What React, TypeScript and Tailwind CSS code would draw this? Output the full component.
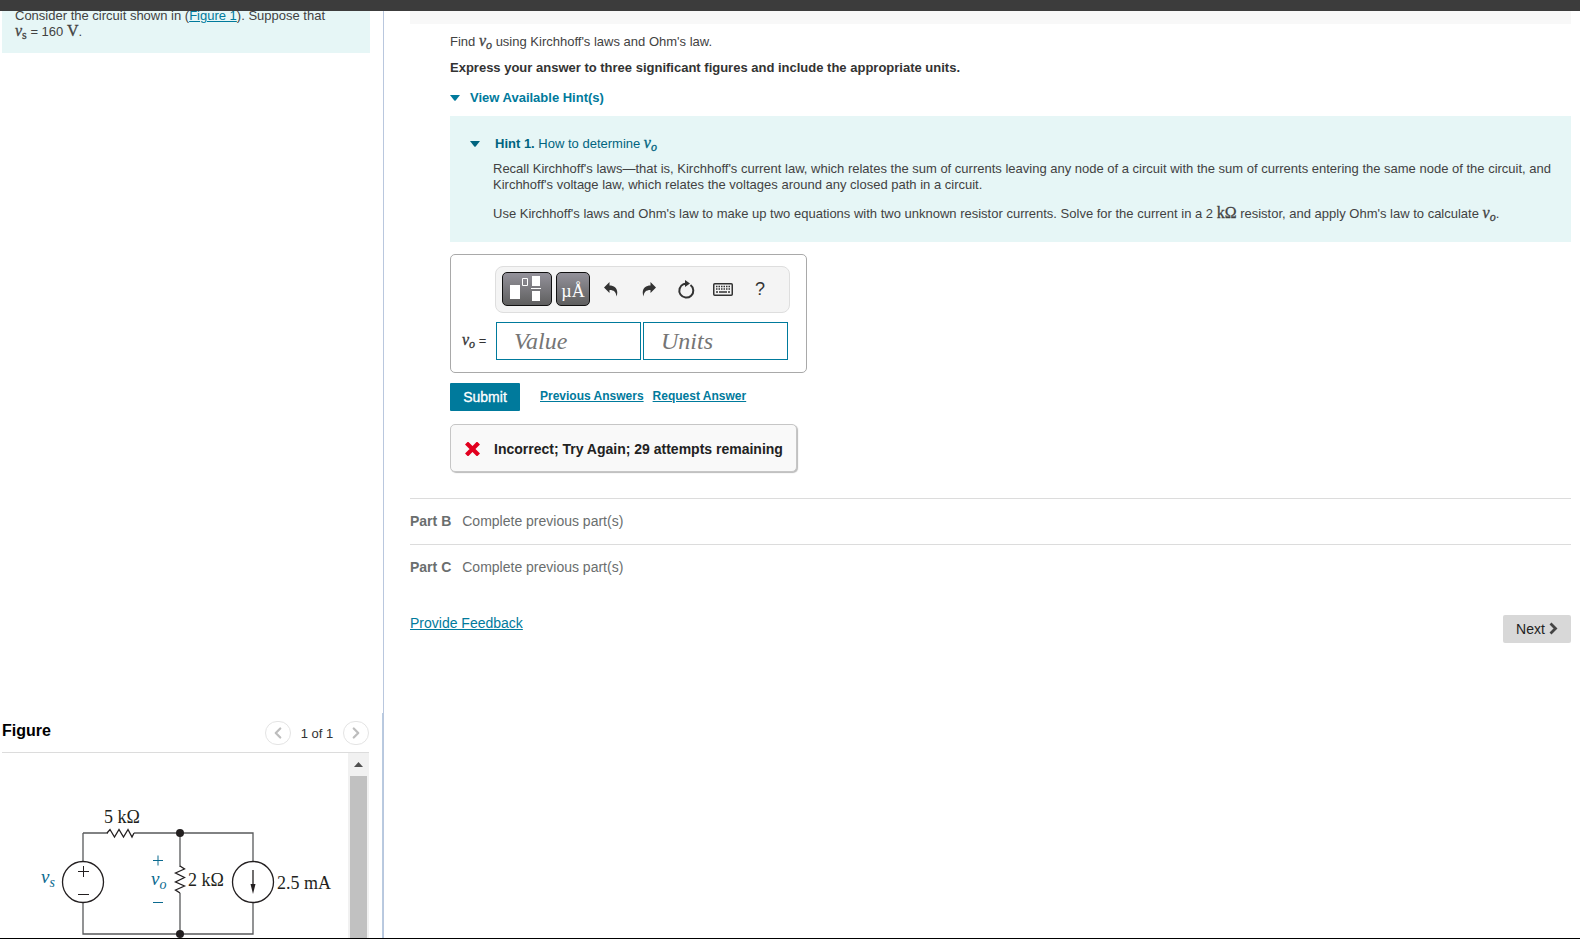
import { useState, type ReactNode } from 'react';
import { ChevronLeft, ChevronRight } from 'lucide-react';

const PARTS = [
  { id: 'B', status: 'Complete previous part(s)' },
  { id: 'C', status: 'Complete previous part(s)' },
];

function Sym({ sub, upright }: { sub: string; upright?: boolean }) {
  return (
    <span className="font-['Liberation_Serif',serif] text-base leading-0 italic [-webkit-text-stroke:0.3px]">
      v<span className={upright ? 'align-[-3px] text-xs leading-0 not-italic' : 'align-[-3px] text-xs leading-0'}>{sub}</span>
    </span>
  );
}

function Unit({ children }: { children: ReactNode }) {
  return <span className="font-['Liberation_Serif',serif] text-base leading-0 [-webkit-text-stroke:0.3px]">{children}</span>;
}

function Caret() {
  return (
    <svg width="10" height="6" viewBox="0 0 10 6" fill="currentColor" aria-hidden="true">
      <path d="M0 0h10L5.7 5.4a1 1 0 0 1-1.4 0z" />
    </svg>
  );
}

function Circuit() {
  return (
    <svg width="346" height="200" viewBox="0 0 346 200" className="block shrink-0" role="img" aria-label="Circuit diagram">
      <g fill="none" stroke="#58595b" strokeWidth="1.3">
        <path d="M83 80H108M83 109V80M134 80H253V109" />
        <path d="M83 150V181H253V150M180 80V114M180 140V181" />
      </g>
      <g fill="none" stroke="#231f20" strokeWidth="1.3">
        <path d="M107 80L110 76.500l4.500 7.500L119 76.500l4.500 7.500L128 76.500l4 7.500L134 80" />
        <path d="M180 113l4.500 3-9 4 9 4.500-9 4.500 9 4-9 4 4.500 3" />
        <circle cx="83" cy="129" r="20.500" />
        <circle cx="253" cy="129" r="20.500" />
        <path d="M253 117v17" />
        <path d="M78 118.500h11M83.500 113v11M78 141.500h11" strokeWidth="1" />
      </g>
      <path d="M250.500 131h5l-2.500 10z" fill="#231f20" />
      <circle cx="180" cy="80" r="4" fill="#231f20" />
      <circle cx="180" cy="181" r="4" fill="#231f20" />
      <g className="font-['Liberation_Serif',serif]" fontSize="18" fill="#231f20">
        <text x="104" y="70">5 kΩ</text>
        <text x="188" y="133">2 kΩ</text>
        <text x="277" y="136">2.5 mA</text>
      </g>
      <g className="font-['Liberation_Serif',serif]" fontSize="19" fontStyle="italic" fill="#0b6a8f">
        <text x="41" y="130">v<tspan dy="4" fontSize="14">s</tspan></text>
        <text x="151" y="132">v<tspan dy="4" fontSize="14">o</tspan></text>
      </g>
      <path d="M153 107.500h10M158 102.500v10M153 149.500h10" stroke="#0b6a8f" fill="none" />
    </svg>
  );
}

function AnswerBox() {
  const [value, setValue] = useState('');
  const [units, setUnits] = useState('');
  const dark = 'flex h-[34px] items-center justify-center rounded-[5px] border border-[#111] bg-linear-to-b from-[#94929b] to-[#5f5f5f] text-white';
  const field = "h-[38px] w-[145px] border border-[#007a9c] bg-white pl-[17px] font-['Liberation_Serif',serif] text-2xl italic text-[#333] outline-none placeholder:text-[#757575]";
  return (
    <div className="mt-3 w-[357px] rounded-[5px] border border-[#a9a9a9] pt-[11px] pb-3 pl-[11px]">
      <div className="ml-[33px] flex h-[47px] w-[295px] items-center rounded-lg border border-[#dedede] bg-[#f4f4f4] pb-[1px] pl-[6px] text-[#333]">
        <button className={`${dark} w-[50px] pr-1`} aria-label="Templates">
          <svg width="32" height="26" viewBox="0 0 32 26" fill="#fff">
            <rect x="1" y="9" width="10" height="14" />
            <path d="M13.500 2.500h5v7h-5z" fill="none" stroke="#fff" />
            <rect x="23" y="0" width="8" height="10" />
            <rect x="22" y="12" width="10" height="1" />
            <rect x="23" y="15" width="8" height="10" />
          </svg>
        </button>
        <button className={`${dark} ml-1 w-[34px] pt-1 font-['Liberation_Serif',serif] text-lg`} aria-label="Symbols">µÅ</button>
        <button className="ml-[14px]" aria-label="Undo">
          <svg width="14" height="15" viewBox="0 0 14 15" fill="currentColor">
            <path d="M0 5.500L5.500 0v3.500C11 3.500 15 7.500 12.500 14.500 12 10 10 8 5.500 8v3z" />
          </svg>
        </button>
        <button className="ml-6" aria-label="Redo">
          <svg width="14" height="15" viewBox="0 0 14 15" fill="currentColor">
            <path d="M14 5.500L8.500 0v3.500C3 3.500-1 7.500 1.500 14.500 2 10 4 8 8.500 8v3z" />
          </svg>
        </button>
        <button className="ml-[21px]" aria-label="Reset">
          <svg width="18" height="19" viewBox="0 0 18 19">
            <path d="M13.500 5A7 7 0 1 1 6.500 4.200L9.500 3.500" fill="none" stroke="currentColor" strokeWidth="2" />
            <path d="M8 0l5 3.500L8 7z" fill="currentColor" />
          </svg>
        </button>
        <button className="ml-[18px]" aria-label="Keyboard">
          <svg width="20" height="13" viewBox="0 0 20 13">
            <rect x=".75" y=".75" width="18.500" height="11.500" rx="1" fill="none" stroke="currentColor" strokeWidth="1.500" />
            <path d="M3 3.500h14M3 6h14" stroke="currentColor" strokeWidth="1.500" strokeDasharray="1.500 1" />
            <path d="M3 9h2M6 9h8M15 9h2" stroke="currentColor" strokeWidth="1.500" />
          </svg>
        </button>
        <button className="ml-[22px] text-lg" aria-label="Help">?</button>
      </div>
      <div className="mt-[9px] flex items-center">
        <span className="w-[34px] text-[13px] text-[#333]"><Sym sub="o" /> =</span>
        <input className={field} aria-label="Value" placeholder="Value" value={value} onChange={e => setValue(e.target.value)} />
        <input className={`${field} ml-[2px]`} aria-label="Units" placeholder="Units" value={units} onChange={e => setUnits(e.target.value)} />
      </div>
    </div>
  );
}

export default function App() {
  return (
    <div className="flex h-screen flex-col overflow-hidden border-b border-black bg-white font-['Liberation_Sans',Arial,sans-serif] text-[13px] leading-4 text-[#424242]">
      <header className="h-[11px] shrink-0 bg-[#3c3c3c]" />
      <div className="flex min-h-0 flex-1">
        <aside className="flex w-96 shrink-0 flex-col border-r border-[#b9c7de]">
          <div className="flex-1 overflow-hidden pl-[2px]">
            {/* scrolled slightly under the header */}
            <div className="-mt-[3px] mr-[13px] h-[45px] bg-[#e6f6f6] pl-[13px]">
              <p>
                Consider the circuit shown in (<a href="#figure" className="text-[#007a9c] underline">Figure 1</a>). Suppose that
                <br />
                <Sym sub="s" upright /> = 160 <Unit>V</Unit>.
              </p>
            </div>
          </div>
          {/* Figure viewer */}
          <section id="figure" className="flex h-[225px] flex-col border-r border-[#b9cbe0] pl-[2px] pr-[13px]">
            <div className="flex h-10 shrink-0 items-center justify-between border-b border-[#dcdcdc]">
              <h2 className="pb-1 text-base font-bold text-black">Figure</h2>
              <div className="flex items-center">
                <button className="flex h-6 w-[26px] items-center justify-center rounded-full border border-[#e4e4e4] text-[#bdbdbd]" aria-label="Previous figure">
                  <ChevronLeft size={18} strokeWidth={3} />
                </button>
                <span className="w-[52px] pt-[3px] text-center text-[#333]">1 of 1</span>
                <button className="flex h-6 w-[26px] items-center justify-center rounded-full border border-[#e4e4e4] text-[#bdbdbd]" aria-label="Next figure">
                  <ChevronRight size={18} strokeWidth={3} />
                </button>
              </div>
            </div>
            <div className="flex min-h-0 flex-1 overflow-hidden">
              <div className="-ml-[2px] flex-1 overflow-hidden">
                <Circuit />
              </div>
              <div className="flex w-[21px] shrink-0 flex-col items-center bg-[#f1f1f1]">
                <div className="flex h-[23px] items-center text-[#505050]">
                  <svg width="9" height="5" viewBox="0 0 9 5" fill="currentColor"><path d="M4.500 0L9 5H0z" /></svg>
                </div>
                <div className="w-[17px] flex-1 bg-[#c1c1c1]" />
              </div>
            </div>
          </section>
        </aside>

        <main className="min-w-0 flex-1 overflow-hidden pl-[26px] pr-[9px]">
          <div className="h-[13px] bg-[#f8f8f8]" />
          <div className="pl-10">
            <p className="pt-[10px]">Find <Sym sub="o" /> using Kirchhoff's laws and Ohm's law.</p>
            <p className="mt-[10px] font-bold text-[#333]">Express your answer to three significant figures and include the appropriate units.</p>
            <button className="mt-[14px] flex items-center gap-[10px] font-bold text-[#007a9c]">
              <Caret />
              View Available Hint(s)
            </button>

            <section className="mt-[10px] bg-[#e6f6f6] pt-5 pr-4 pb-5 pl-5">
              <button className="flex items-center gap-[15px] text-[#00647f]">
                <Caret />
                <span><b>Hint 1.</b> How to determine <Sym sub="o" /></span>
              </button>
              <div className="pl-[23px]">
                <p className="mt-[9px]">
                  Recall Kirchhoff's laws—that is, Kirchhoff's current law, which relates the sum of currents leaving any node of a circuit with the sum of currents entering the same node of the circuit, and Kirchhoff's voltage law, which relates the voltages around any closed path in a circuit.
                </p>
                <p className="mt-[13px]">
                  Use Kirchhoff's laws and Ohm's law to make up two equations with two unknown resistor currents. Solve for the current in a 2 <Unit>kΩ</Unit> resistor, and apply Ohm's law to calculate <Sym sub="o" />.
                </p>
              </div>
            </section>

            <AnswerBox />

            <div className="mt-[10px] flex items-center text-xs font-bold">
              <button className="h-7 w-[70px] rounded-[1px] bg-[#007a9c] text-sm font-normal text-white [-webkit-text-stroke:0.3px]">Submit</button>
              <a href="#previous" className="ml-5 pb-[2px] text-[#007a9c] underline">Previous Answers</a>
              <a href="#request" className="ml-[9px] pb-[2px] text-[#007a9c] underline">Request Answer</a>
            </div>

            <div className="mt-[13px] flex h-12 w-fit items-center gap-[14px] rounded-[5px] border border-[#c6c6c6] bg-[#f9f9f9] pt-[1px] pr-[13px] pl-[14px] text-sm font-bold text-[#222] shadow-[1px_1px_1px_#bbb]">
              <svg width="15" height="14" viewBox="0 0 15 14" aria-hidden="true">
                <path d="M3 2.500l9 9M12 2.500l-9 9" stroke="#e2001f" strokeWidth="4.200" strokeLinecap="square" />
              </svg>
              Incorrect; Try Again; 29 attempts remaining
            </div>
          </div>

          <div className="mt-[26px] text-sm text-[#6a6e6e]">
            {PARTS.map(part => (
              <div key={part.id} className="flex h-[46px] items-center gap-[11px] border-t border-[#dcdcdc] pb-[2px]">
                <b>Part {part.id}</b>
                <span>{part.status}</span>
              </div>
            ))}
          </div>

          <div className="mt-[23px] flex items-start justify-between text-sm">
            <a href="#feedback" className="text-[#007a9c] underline">Provide Feedback</a>
            <button className="mt-[2px] flex h-7 w-[68px] items-center justify-center gap-1 rounded-[2px] bg-[#d8d8d8] pb-[1px] text-[#222]">
              Next
              <svg width="9" height="13" viewBox="0 0 9 13" aria-hidden="true">
                <path d="M1.500 1.500l5 5-5 5" fill="none" stroke="#444" strokeWidth="2.800" />
              </svg>
            </button>
          </div>
        </main>
      </div>
    </div>
  );
}
